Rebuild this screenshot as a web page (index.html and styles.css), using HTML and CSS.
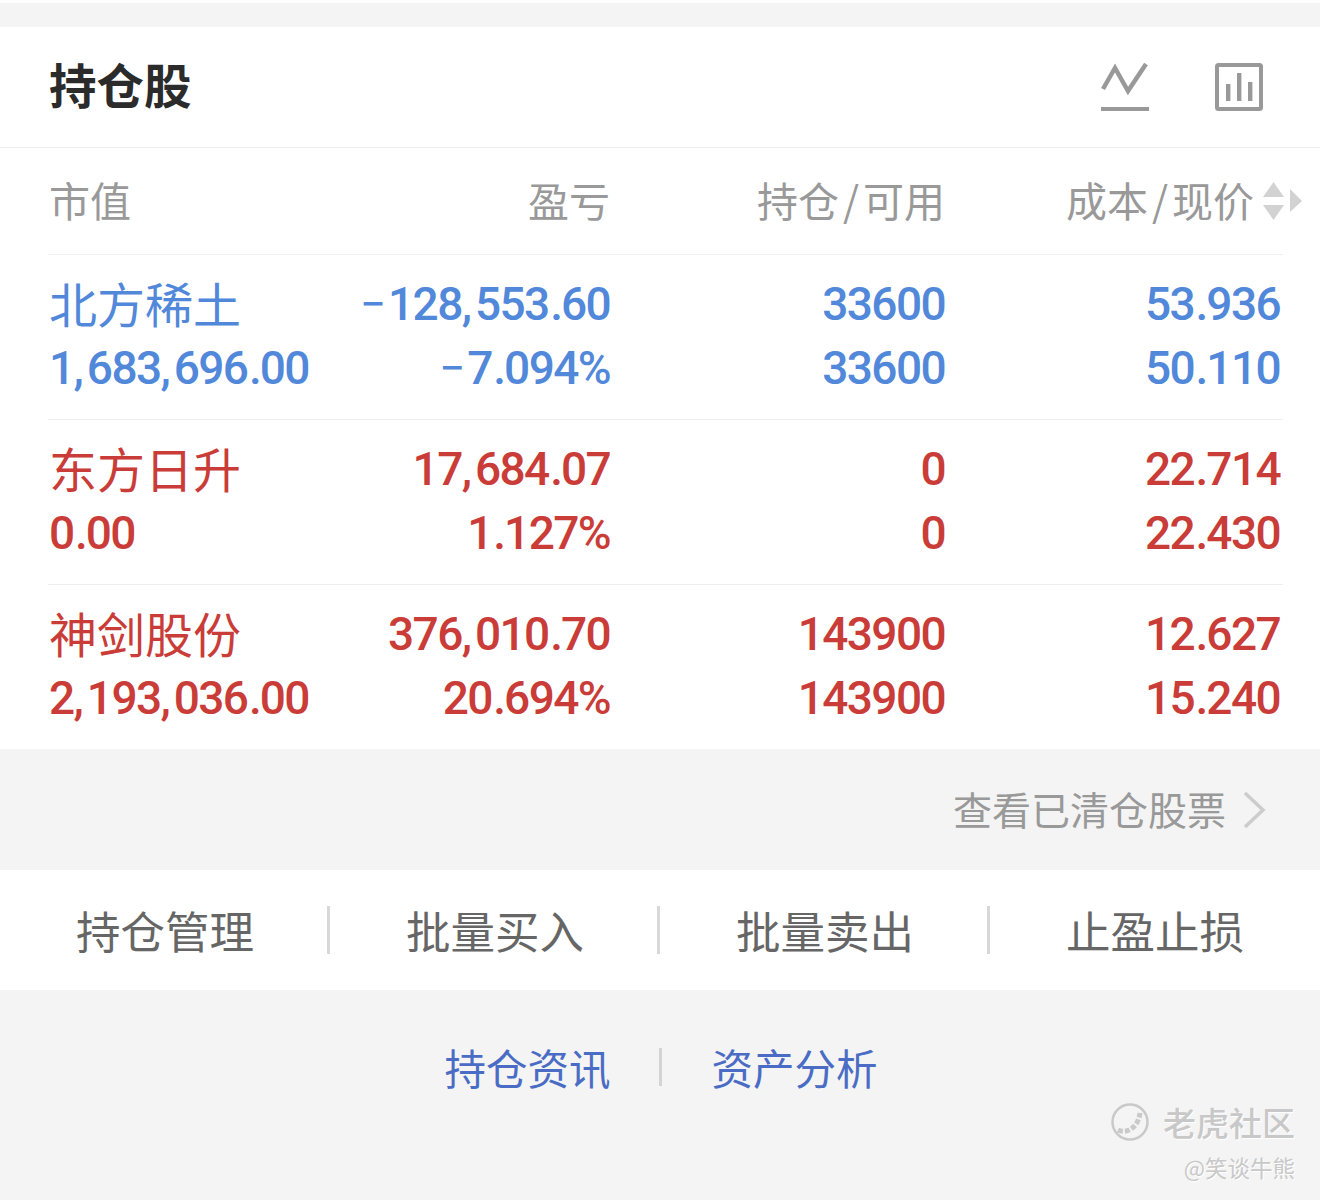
FILE: index.html
```html
<!DOCTYPE html>
<html>

<head>
    <meta charset='utf-8'>
    <title>持仓股</title>
    <meta name='viewport' content='width=device-width, initial-scale=1'>
    <link rel="stylesheet" href="styles.css">
</head>

<body>
    <div class="top-gap"></div>
    <div class="header">
        <div class="title">持仓股</div>
        <div class="header-icons">
            <svg class="icon" width="50" height="50" viewBox="0 0 50 50">
                <path d="M3 27 L15 6 L28 29 L46 2" fill="none" stroke="#999" stroke-width="4.5" />
                <rect x="1" y="45" width="48" height="4" fill="#999" />
            </svg>
            <svg class="icon" width="50" height="50" viewBox="0 0 50 50">
                <rect x="3" y="3" width="44" height="44" rx="1.5" fill="none" stroke="#999" stroke-width="4" />
                <rect x="12" y="22" width="4.4" height="17" fill="#999" />
                <rect x="23" y="11" width="4.4" height="28" fill="#999" />
                <rect x="34" y="20" width="4.4" height="19" fill="#999" />
            </svg>
        </div>
    </div>

    <div class="table">
        <div class="row head">
            <div class="cell left">市值</div>
            <div class="cell">盈亏</div>
            <div class="cell">持仓<span class="slash">/</span>可用</div>
            <div class="cell sortable">成本<span class="slash">/</span>现价
                <svg class="sort" width="39" height="40" viewBox="0 0 39 40">
                    <path d="M0 16 L10.5 1 L21 16 Z M0 24 L21 24 L10.5 39 Z" fill="#d2d2d2" />
                    <path d="M27 8 L39 20 L27 31 Z" fill="#d2d2d2" />
                </svg>
            </div>
        </div>

        <div class="row blue">
            <div class="cell left"><div class="name">北方稀土</div><div class="num">1<i>,</i>683<i>,</i>696<em>.</em>00</div></div>
            <div class="cell"><div class="num"><b>−</b>128<i>,</i>553<em>.</em>60</div><div class="num"><b>−</b>7<em>.</em>094%</div></div>
            <div class="cell"><div class="num">33600</div><div class="num">33600</div></div>
            <div class="cell"><div class="num">53<em>.</em>936</div><div class="num">50<em>.</em>110</div></div>
        </div>
        <div class="row red">
            <div class="cell left"><div class="name">东方日升</div><div class="num">0<em>.</em>00</div></div>
            <div class="cell"><div class="num">17<i>,</i>684<em>.</em>07</div><div class="num">1<em>.</em>127%</div></div>
            <div class="cell"><div class="num">0</div><div class="num">0</div></div>
            <div class="cell"><div class="num">22<em>.</em>714</div><div class="num">22<em>.</em>430</div></div>
        </div>
        <div class="row red last">
            <div class="cell left"><div class="name">神剑股份</div><div class="num">2<i>,</i>193<i>,</i>036<em>.</em>00</div></div>
            <div class="cell"><div class="num">376<i>,</i>010<em>.</em>70</div><div class="num">20<em>.</em>694%</div></div>
            <div class="cell"><div class="num">143900</div><div class="num">143900</div></div>
            <div class="cell"><div class="num">12<em>.</em>627</div><div class="num">15<em>.</em>240</div></div>
        </div>
    </div>

    <div class="cleared">
        <span class="cleared-text">查看已清仓股票</span>
        <svg width="24" height="38" viewBox="0 0 24 38">
            <path d="M3 2 L21 19 L3 36" fill="none" stroke="#ccc" stroke-width="3.5" />
        </svg>
    </div>

    <div class="actions">
        <div class="action">持仓管理</div>
        <div class="action">批量买入</div>
        <div class="action">批量卖出</div>
        <div class="action">止盈止损</div>
    </div>

    <div class="footer">
        <div class="links">
            <span class="link">持仓资讯</span>
            <span class="link-sep"></span>
            <span class="link">资产分析</span>
        </div>
        <div class="watermark">
            <div class="wm-line">
                <svg width="40" height="40" viewBox="0 0 40 40">
                    <circle cx="20" cy="20" r="17.5" fill="none" stroke="#c9c9c9" stroke-width="2.5" />
                    <path d="M8 28 C17 32 28 26 30 11" fill="none" stroke="#c9c9c9" stroke-width="5" stroke-dasharray="5 2" />
                </svg>
                <span class="wm-name">老虎社区</span>
            </div>
            <div class="wm-user">@笑谈牛熊</div>
        </div>
    </div>
</body>

</html>
```

FILE: styles.css
```css
body {
    background: #f4f4f4;
    color: #333;
    font-family: "Noto Sans CJK SC", "Noto Sans", sans-serif;
    height: 1200px;
    margin: 0;
    overflow-x: hidden;
    position: relative;
}

.top-gap {
    border-top: 3px solid #fff;
    height: 24px;
}

.header {
    align-items: center;
    background: #fff;
    border-bottom: 1px solid #eee;
    display: flex;
    height: 120px;
    justify-content: space-between;
    padding: 0 56px 0 49px;
}

.title {
    color: #2b2b2b;
    font-size: 47.5px;
    font-weight: 700;
    line-height: 1;
    padding-bottom: 7px;
}

.header-icons {
    display: flex;
    gap: 64px;
}

.icon {
    display: block;
}

.table {
    background: #fff;
    padding: 0 37px 0 48px;
}

.row {
    border-bottom: 1px solid #eee;
    display: grid;
    grid-template-columns: 200px 362px 335px 335px;
    height: 147px;
    padding-top: 17px;
}

.row.last {
    border-bottom: none;
}

.head {
    align-items: center;
    color: #999;
    font-size: 41px;
    height: 106px;
    line-height: 1;
    padding-top: 0;
}

.head .cell {
    padding-bottom: 4px;
}

.cell {
    text-align: right;
    white-space: nowrap;
}

.left {
    padding-left: 1px;
    text-align: left;
}

.sortable {
    align-items: center;
    display: flex;
    justify-content: flex-end;
    margin-right: -22px;
}

.sort {
    margin-left: 9px;
    margin-top: 4px;
}

.slash {
    margin: 0 4px;
}

.blue {
    color: #5288da;
}

.red {
    color: #c93c38;
}

.name {
    font-size: 48px;
    height: 64px;
    line-height: 60px;
}

.num {
    font-family: Roboto, sans-serif;
    font-size: 46px;
    font-weight: 500;
    height: 64px;
    letter-spacing: -1.6px;
    line-height: 64px;
}

/* wider punctuation than Roboto has */
.num i {
    font-style: normal;
    letter-spacing: 3px;
}

.num em {
    font-style: normal;
    letter-spacing: -2px;
    padding-left: 1.5px;
}

.num b {
    font-weight: 400;
    letter-spacing: 2px;
}

.cleared {
    align-items: center;
    color: #999;
    display: flex;
    font-size: 39px;
    gap: 16px;
    height: 121px;
    justify-content: flex-end;
    padding-right: 54px;
}

.cleared-text {
    padding-bottom: 4px;
}

.actions {
    align-items: center;
    background: #fff;
    display: grid;
    grid-template-columns: repeat(4, 330px);
    height: 120px;
}

.action {
    border-right: 3px solid #d8d8d8;
    color: #666;
    font-size: 44.5px;
    line-height: 48px;
    padding-left: 3px;
    text-align: center;
}

.action:last-child {
    border-right-color: transparent;
}

.footer {
    height: 210px;
}

.links {
    align-items: center;
    color: #4a6cc5;
    display: flex;
    font-size: 41.5px;
    gap: 50px;
    justify-content: center;
    padding-left: 2px;
    padding-top: 47px;
}

.link-sep {
    background: #d4d4d4;
    height: 38px;
    margin-left: -2px;
    width: 3px;
}

.watermark {
    color: #c8c8c8;
    position: absolute;
    right: 25px;
    text-align: right;
    text-shadow: 1px 1px 0 #fff;
    top: 1101px;
}

.wm-line {
    align-items: center;
    display: flex;
    gap: 13px;
}

.wm-name {
    font-size: 33px;
    font-weight: 500;
    line-height: 42px;
}

.wm-user {
    font-size: 22.5px;
    line-height: 36px;
    margin-top: 6px;
}
```
